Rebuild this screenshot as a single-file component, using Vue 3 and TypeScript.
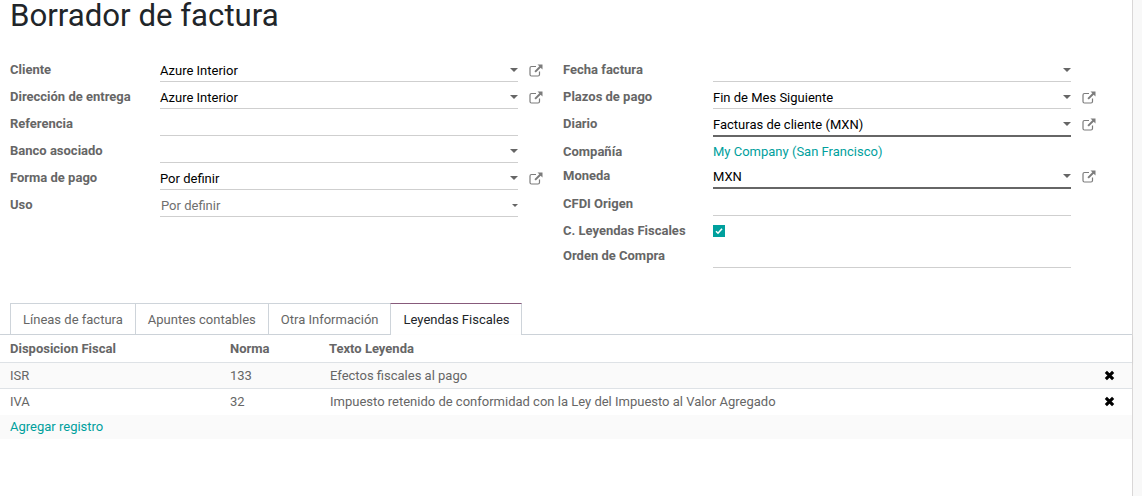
<script setup lang="ts">
interface Field {
  label: string
  value?: string
  caret?: boolean
  ext?: boolean
  focus?: boolean
  muted?: boolean
  link?: boolean
  check?: boolean
  plain?: boolean
  h: number
}
const leftFields: Field[] = [
  { label: 'Cliente', value: 'Azure Interior', caret: true, ext: true, h: 27 },
  { label: 'Dirección de entrega', value: 'Azure Interior', caret: true, ext: true, h: 27 },
  { label: 'Referencia', h: 27 },
  { label: 'Banco asociado', caret: true, h: 27 },
  { label: 'Forma de pago', value: 'Por definir', caret: true, ext: true, h: 27 },
  { label: 'Uso', value: 'Por definir', caret: true, muted: true, h: 27 },
]
const rightFields: Field[] = [
  { label: 'Fecha factura', caret: true, h: 27 },
  { label: 'Plazos de pago', value: 'Fin de Mes Siguiente', caret: true, ext: true, h: 27 },
  { label: 'Diario', value: 'Facturas de cliente (MXN)', caret: true, ext: true, focus: true, h: 28 },
  { label: 'Compañía', value: 'My Company (San Francisco)', link: true, plain: true, h: 24 },
  { label: 'Moneda', value: 'MXN', caret: true, ext: true, focus: true, h: 28 },
  { label: 'CFDI Origen', h: 27 },
  { label: 'C. Leyendas Fiscales', check: true, plain: true, h: 25 },
  { label: 'Orden de Compra', h: 27 },
]
const tabs = ['Líneas de factura', 'Apuntes contables', 'Otra Información', 'Leyendas Fiscales']
const rows = [
  { a: 'ISR', b: '133', c: 'Efectos fiscales al pago' },
  { a: 'IVA', b: '32', c: 'Impuesto retenido de conformidad con la Ley del Impuesto al Valor Agregado' },
]
</script>

<template>
  <div class="page">
    <main class="sheet">
      <h1 class="title">Borrador de factura</h1>
      <div class="columns">
        <div v-for="(col, ci) in [leftFields, rightFields]" :key="ci" class="col">
          <div v-for="f in col" :key="f.label" class="row" :style="{ height: f.h + 'px' }">
            <div class="label">{{ f.label }}</div>
            <div class="field" :class="{ plain: f.plain, focus: f.focus }">
              <span v-if="f.value" class="value" :class="{ muted: f.muted, link: f.link }">{{ f.value }}</span>
              <span v-if="f.check" class="check">
                <svg width="8" height="8" viewBox="0 0 8 8"><path d="M1 4.2 3 6.2 7 1.8" fill="none" stroke="#fff" stroke-width="1.6" /></svg>
              </span>
              <span v-if="f.caret" class="caret" :class="{ small: f.muted }"></span>
            </div>
            <div class="ext">
              <svg v-if="f.ext" width="14" height="13" viewBox="0 0 14 13">
                <path d="M10.5 7.5v3a1.5 1.5 0 0 1-1.500 1.500H2.500A1.500 1.500 0 0 1 1 10.500V4a1.500 1.500 0 0 1 1.500-1.500H7" fill="none" stroke="#7c7c7c" stroke-width="1.200" />
                <path d="M8.500 0.500H13.500V5.500L11.700 3.700 6.800 8.600 5.400 7.200 10.300 2.300Z" fill="#7c7c7c" />
              </svg>
            </div>
          </div>
        </div>
      </div>
      <div class="tabs">
        <div v-for="(t, i) in tabs" :key="t" class="tab" :class="{ active: i === 3 }">{{ t }}</div>
      </div>
      <div class="thead">
        <span class="c1">Disposicion Fiscal</span>
        <span class="c2">Norma</span>
        <span class="c3">Texto Leyenda</span>
      </div>
      <div v-for="(r, i) in rows" :key="r.a" class="trow" :class="{ shade: i === 0, last: i === rows.length - 1 }">
        <span class="c1">{{ r.a }}</span>
        <span class="c2">{{ r.b }}</span>
        <span class="c3 num">{{ r.c }}</span>
        <svg class="del" width="11" height="11" viewBox="0 0 10 10"><path d="M1.700 1.700 8.300 8.300M8.300 1.700 1.700 8.300" stroke="#000" stroke-width="2.800" /></svg>
      </div>
      <div class="add"><span class="link">Agregar registro</span></div>
    </main>
    <aside class="gutter"></aside>
  </div>
</template>

<style>
html, body { margin: 0; background: #fff; }
</style>

<style scoped>
.page {
  display: flex;
  width: 1142px;
  height: 496px;
  overflow: hidden;
  font-family: Roboto, "Liberation Sans", sans-serif;
  font-size: 13px;
  color: #666;
}
.sheet { width: 1132px; background: #fff; }
.gutter { flex: 1; background: #f8f8f8; border-left: 1px solid #d9d7d7; }
.title {
  margin: 0;
  height: 55px;
  padding-left: 10px;
  font-size: 31.2px;
  line-height: 32px;
  font-weight: 400;
  color: #212529;
}
.columns { display: flex; height: 248px; }
.col { width: 553px; }
.row { display: flex; align-items: stretch; padding-left: 10px; }
.label { width: 150px; font-weight: 700; color: #666; line-height: 16px; padding-top: 7px; box-sizing: border-box; }
.field {
  width: 358px;
  display: flex;
  align-items: center;
  justify-content: space-between;
  border-bottom: 1px solid #cfcfcf;
  box-sizing: border-box;
  color: #000;
}
.field.focus { border-bottom: 2px solid #666; }
.field.plain { border-bottom: 0; }
.value { padding-top: 5px; line-height: 16px; }
.value.muted { color: #6f6f6f; padding-left: 1px; }
.value.link { color: #00a09d; padding-top: 5px; }
.link { color: #00a09d; }
.caret {
  margin-left: auto;
  width: 0;
  height: 0;
  margin-top: 4px;
  border-left: 4px solid transparent;
  border-right: 4px solid transparent;
  border-top: 4px solid #666;
}
.caret.small { border-left-width: 3px; border-right-width: 3px; border-top-width: 3px; }
.check {
  width: 12px;
  height: 12px;
  background: #00a09d;
  display: flex;
  align-items: center;
  justify-content: center;
  margin-top: 5px;
}
.ext { width: 35px; padding: 9px 0 0 11px; box-sizing: border-box; }
.tabs {
  display: flex;
  height: 32px;
  box-sizing: border-box;
  padding-left: 10px;
  border-bottom: 1px solid #ced4da;
}
.tab {
  height: 31px;
  padding: 0 12px;
  line-height: 31px;
  box-sizing: border-box;
  border: 1px solid #ced4da;
  border-bottom: 0;
  margin-right: -1px;
  color: #666;
  font-size: 13px;
}
.tab.active {
  height: 32px;
  padding: 0 11px 0 13px;
  background: #fff;
  color: #212529;
  border-top-color: #875a7b;
  margin-left: -1px;
  margin-right: 0;
}
.thead, .trow { display: flex; position: relative; padding-left: 10px; align-items: center; }
.thead {
  height: 28px;
  font-weight: 700;
  color: #666;
  border-bottom: 1px solid #dee2e6;
  box-sizing: border-box;
  box-shadow: 0 1px 3px rgba(0,0,0,.06);
}
.trow {
  height: 26px;
  box-sizing: border-box;
  border-bottom: 1px solid #dee2e6;
  color: #666;
}
.trow.last { border-bottom: 0; padding-bottom: 1px; }
.shade { background: #fafafa; }
.c1 { width: 220px; }
.c2 { width: 99px; }
.c3.num { padding-left: 1px; }
.del { position: absolute; left: 1104px; top: 7px; }
.add { height: 24px; background: #fafafa; padding-left: 10px; line-height: 24px; }
</style>
